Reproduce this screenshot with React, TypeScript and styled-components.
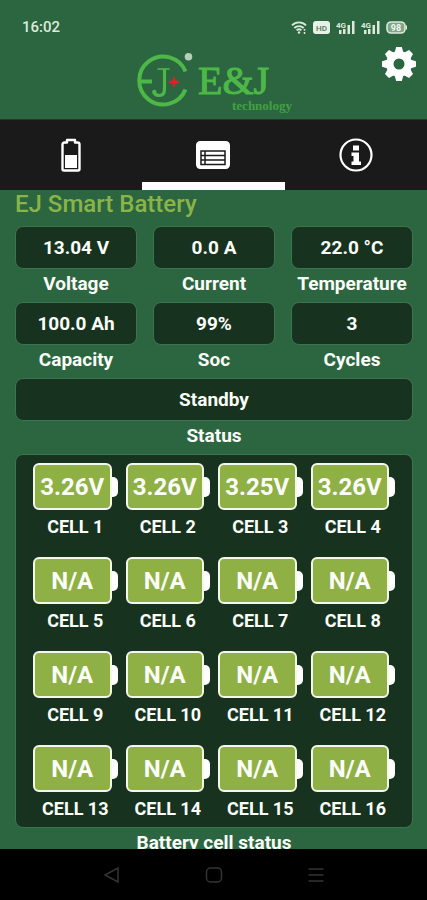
import React, { useState } from "react";
import styled, { createGlobalStyle } from "styled-components";

const GlobalStyle = createGlobalStyle`
  *, *::before, *::after { box-sizing: border-box; }
  body {
    margin: 0;
    background: #000;
    font-family: Roboto, "Noto Sans CJK SC", sans-serif;
  }
  button { font: inherit; color: inherit; padding: 0; border: 0; background: none; cursor: pointer; }
  svg { display: block; }
`;

const Screen = styled.div`
  display: flex;
  flex-direction: column;
  height: 100vh;
  background: #2b6640;
  color: #fbfdf8;
`;

const StatusBar = styled.div`
  display: flex;
  align-items: center;
  justify-content: space-between;
  height: 52px;
  padding: 2px 20px 0 22px;
  color: #dceadb;
`;

const Clock = styled.time`
  font-size: 15px;
  font-weight: 500;
  line-height: 20px;
`;

const StatusIcons = styled.div`
  display: flex;
  align-items: center;
  gap: 6px;
`;

const Header = styled.header`
  display: grid;
  grid-template-columns: 1fr auto 1fr;
  align-items: start;
  height: 67px;
  padding: 0 11px;
`;

const Logo = styled.div`
  display: flex;
  grid-column: 2;
  gap: 4px;
  color: #4db848;
  font-family: "Liberation Serif", serif;
`;

const Wordmark = styled.div`
  display: flex;
  flex-direction: column;
`;

const BrandName = styled.span`
  font-size: 40px;
  line-height: 34px;
  margin-top: 12px;
  -webkit-text-stroke: 1px currentColor;
`;

const BrandSub = styled.span`
  align-self: flex-end;
  margin-left: 34px;
  font-size: 13px;
  font-weight: 700;
  line-height: 16px;
  color: #43a044;
`;

const SettingsButton = styled.button`
  grid-column: 3;
  justify-self: end;
  margin-top: -5px;
  color: #fff;
`;

const Tabs = styled.nav`
  display: grid;
  grid-template-columns: repeat(3, 1fr);
  flex: none;
  height: 71px;
  background: #191a19;
  border-top: 1px solid #24382a;
`;

const Tab = styled.button<{ $active: boolean }>`
  display: flex;
  align-items: center;
  justify-content: center;
  border-top: 8px solid transparent;
  border-bottom: 8px solid transparent;
  color: #fff;
  ${(p) => p.$active && "border-bottom-color: #fff;"}
`;

const Content = styled.main`
  flex: 1;
  min-height: 0;
  overflow-y: auto;
  scrollbar-width: none;
  padding: 0 14px 0 15px;
`;

const Title = styled.h1`
  margin: 0 0 8px;
  font-size: 24px;
  font-weight: 500;
  line-height: 28px;
  color: #8ab447;
`;

const Metrics = styled.div`
  display: grid;
  grid-template-columns: repeat(3, 1fr);
  gap: 4px 16px;
`;

const Figure = styled.section<{ $wide?: boolean }>`
  display: flex;
  flex-direction: column;
  ${(p) => p.$wide && "grid-column: 1 / -1;"}
`;

const ValueBox = styled.div`
  display: flex;
  align-items: center;
  justify-content: center;
  height: 43px;
  border: 1px solid #3d7450;
  border-radius: 8px;
  background: #17321e;
  font-size: 19px;
  font-weight: 700;
`;

const Caption = styled.div`
  padding-top: 1px;
  font-size: 19px;
  font-weight: 700;
  line-height: 28px;
  text-align: center;
  white-space: nowrap;
`;

const CellPanel = styled.div`
  display: grid;
  grid-template-columns: repeat(4, 1fr);
  gap: 13px 8px;
  padding: 8px 17px 1px;
  border: 1px solid #3d7450;
  border-radius: 8px;
  background: #17321e;
`;

const Battery = styled.div`
  display: flex;
  align-items: center;
`;

const BatteryBody = styled.div`
  display: flex;
  flex: 1;
  align-items: center;
  justify-content: center;
  height: 47px;
  border: 2px solid #f4f8e8;
  border-radius: 6px;
  background: #8fb045;
  font-size: 24px;
  font-weight: 700;
`;

const Terminal = styled.div`
  width: 6px;
  height: 20px;
  border-radius: 0 5px 5px 0;
  background: #fff;
`;

const CellName = styled.div`
  font-size: 18px;
  font-weight: 700;
  line-height: 34px;
  text-align: center;
  white-space: nowrap;
`;

const SystemNav = styled.nav`
  display: flex;
  flex: none;
  align-items: center;
  justify-content: center;
  gap: 78px;
  height: 51px;
  background: #000;
  color: #343434;
`;

const stats = [
  { label: "Voltage", value: "13.04 V" },
  { label: "Current", value: "0.0 A" },
  { label: "Temperature", value: "22.0 °C" },
  { label: "Capacity", value: "100.0 Ah" },
  { label: "Soc", value: "99%" },
  { label: "Cycles", value: "3" },
];

const readings = ["3.26V", "3.26V", "3.25V", "3.26V"];
const cells = Array.from({ length: 16 }, (_, i) => ({
  name: `CELL ${i + 1}`,
  value: readings[i] ?? "N/A",
}));

const WifiIcon = () => (
  <svg width="16" height="13" viewBox="0 0 16 13" fill="none" stroke="currentColor" strokeWidth="1.8">
    <path d="M1 4.4C5 .4 11 .4 15 4.4M3.3 7c2.7-2.6 6.700-2.600 9.400 0M5.600 9.400c1.400-1.300 3.400-1.300 4.800 0" />
    <circle cx="8" cy="11.500" r="1.200" fill="currentColor" stroke="none" />
    <path d="M13.500 8v1.800M13.500 11v2" strokeWidth="1.500" />
  </svg>
);

const HdIcon = () => (
  <svg width="17" height="13" viewBox="0 0 17 13">
    <rect width="17" height="13" rx="3" fill="#e9f1e6" />
    <text x="8.5" y="9.500" textAnchor="middle" fontSize="8" fontWeight="500" fontFamily="Roboto" fill="#4d7458">HD</text>
  </svg>
);

const SignalIcon = () => (
  <svg width="19" height="13" viewBox="0 0 19 13" fill="currentColor">
    <text x="0" y="6.500" fontSize="8" fontWeight="700" fontFamily="Roboto">4G</text>
    <path d="M3 9h2.500v4H3zM7 8h2.500v5H7zM11.500 4H14v9h-2.500zM16 0h2.500v13H16z" />
  </svg>
);

const ChargeIcon = () => (
  <svg width="21" height="13" viewBox="0 0 21 13">
    <rect x="1" y="1" width="18" height="11" rx="4" fill="#7fa487" stroke="currentColor" strokeWidth="1.600" />
    <path d="M20.300 4.500v4" stroke="currentColor" strokeWidth="1.400" />
    <text x="10" y="9.700" textAnchor="middle" fontSize="9" fontWeight="700" fontFamily="Roboto" fill="#f2f8f0">98</text>
  </svg>
);

const Emblem = () => (
  <svg width="59" height="56" viewBox="0 0 59 56" fill="none" aria-hidden="true">
    <path d="M50.500 19.500A24 24 0 1 0 50.500 37.500" stroke="currentColor" strokeWidth="4" />
    <path d="M3.500 29.500H17" stroke="currentColor" strokeWidth="4" />
    <path d="M22.500 17h12" stroke="currentColor" strokeWidth="1.600" />
    <path d="M29.500 17v20q0 6.500-5 6.500-4 0-5.500-3" stroke="currentColor" strokeWidth="3.200" />
    <circle cx="19.300" cy="40" r="2.200" fill="currentColor" />
    <path d="M39 25.500v9M34 30h10" stroke="#e0202c" strokeWidth="2.600" />
    <path d="M39 27l3 3-3 3-3-3z" fill="#e0202c" />
    <circle cx="53.500" cy="4.800" r="3.800" fill="#b4cfb8" />
  </svg>
);

const GearIcon = () => (
  <svg width="34" height="34" viewBox="-17 -17 34 34" fill="currentColor">
    {[0, 45, 90, 135].map((a) => (
      <path key={a} d="M-2.800-17h5.600l1.700 6h-9zM-2.800 17h5.600l1.700-6h-9z" transform={`rotate(${a})`} />
    ))}
    <circle r="9.200" fill="none" stroke="currentColor" strokeWidth="7.400" />
  </svg>
);

const BatteryTabIcon = () => (
  <svg width="20" height="34" viewBox="0 0 20 34" fill="none">
    <path d="M6 2h8v2.500h2.500q2 0 2 2V31q0 1.500-1.500 1.500H3Q1.500 32.500 1.500 31V6.500q0-2 2-2H6z" stroke="currentColor" strokeWidth="2.400" strokeLinejoin="round" />
    <path d="M4 17h12v13H4z" fill="currentColor" />
  </svg>
);

const ListTabIcon = () => (
  <svg width="34" height="28" viewBox="0 0 34 28" fill="none">
    <rect x="1.200" y="1.200" width="31.600" height="25.600" rx="3" stroke="currentColor" strokeWidth="2.400" />
    <path d="M2 2h30v24H2z" fill="currentColor" />
    <path d="M5 10h24v13.500H5zM5 14.500h24M5 19h24M9 10v13.500" stroke="#191a19" strokeWidth="1.500" />
  </svg>
);

const InfoTabIcon = () => (
  <svg width="34" height="34" viewBox="0 0 34 34" fill="none">
    <circle cx="17" cy="17" r="15.500" stroke="currentColor" strokeWidth="2.200" />
    <path d="M14 7.500h6v5h-6zM12.500 14.500H20v9h2V27h-9.500v-3.500h2V18h-2z" fill="currentColor" />
  </svg>
);

const tabs = [
  { name: "Battery", Icon: BatteryTabIcon },
  { name: "Details", Icon: ListTabIcon },
  { name: "Information", Icon: InfoTabIcon },
];

export default function App() {
  const [active, setActive] = useState(1);
  return (
    <>
      <GlobalStyle />
      <Screen>
        <StatusBar>
          <Clock>16:02</Clock>
          <StatusIcons>
            <WifiIcon />
            <HdIcon />
            <SignalIcon />
            <SignalIcon />
            <ChargeIcon />
          </StatusIcons>
        </StatusBar>
        <Header>
          <Logo>
            <Emblem />
            <Wordmark>
              <BrandName>E&amp;J</BrandName>
              <BrandSub>technology</BrandSub>
            </Wordmark>
          </Logo>
          <SettingsButton aria-label="Settings">
            <GearIcon />
          </SettingsButton>
        </Header>
        <Tabs>
          {tabs.map(({ name, Icon }, i) => (
            <Tab key={name} aria-label={name} $active={i === active} onClick={() => setActive(i)}>
              <Icon />
            </Tab>
          ))}
        </Tabs>
        <Content>
          <Title>EJ Smart Battery</Title>
          <Metrics>
            {stats.map((s) => (
              <Figure key={s.label}>
                <ValueBox>{s.value}</ValueBox>
                <Caption>{s.label}</Caption>
              </Figure>
            ))}
            <Figure $wide>
              <ValueBox>Standby</ValueBox>
              <Caption>Status</Caption>
            </Figure>
            <Figure $wide>
              <CellPanel>
                {cells.map((c) => (
                  <div key={c.name}>
                    <Battery>
                      <BatteryBody>{c.value}</BatteryBody>
                      <Terminal />
                    </Battery>
                    <CellName>{c.name}</CellName>
                  </div>
                ))}
              </CellPanel>
              <Caption>Battery cell status</Caption>
            </Figure>
          </Metrics>
        </Content>
        <SystemNav>
          <button aria-label="Back">
            <svg width="24" height="20" viewBox="0 0 24 20" fill="none" stroke="currentColor" strokeWidth="1.500">
              <path d="M18 3v14L5 10z" />
            </svg>
          </button>
          <button aria-label="Home">
            <svg width="24" height="20" viewBox="0 0 24 20" fill="none" stroke="currentColor" strokeWidth="1.500">
              <rect x="4.500" y="3" width="15" height="14" rx="4" />
            </svg>
          </button>
          <button aria-label="Recent apps">
            <svg width="24" height="20" viewBox="0 0 24 20" fill="none" stroke="currentColor" strokeWidth="1.500">
              <path d="M4.500 4h15M4.500 10h15M4.500 16h15" />
            </svg>
          </button>
        </SystemNav>
      </Screen>
    </>
  );
}
